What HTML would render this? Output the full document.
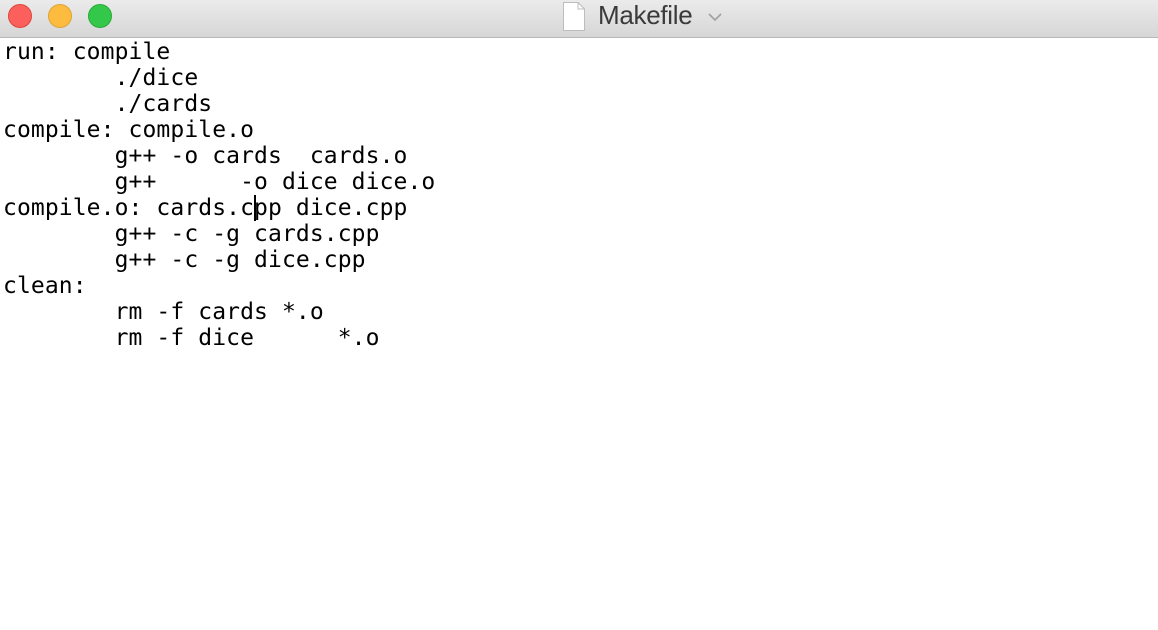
<!DOCTYPE html>
<html><head><meta charset="utf-8"><style>
html,body{margin:0;padding:0;width:1158px;height:630px;background:#fff;overflow:hidden}
.bar{position:absolute;left:0;top:0;width:1158px;height:37px;background:linear-gradient(#ebebeb,#d6d6d6);border-bottom:1px solid #b9b9b9}
.dot{position:absolute;top:4px;width:23px;height:23px;border-radius:50%}
.title{position:absolute;left:598px;top:0px;font-family:"Liberation Sans",sans-serif;font-size:26px;color:#3a3a3a;letter-spacing:-0.3px}
pre{position:absolute;left:3px;top:39px;margin:0;font-family:"DejaVu Sans Mono","Liberation Mono",monospace;font-size:23px;letter-spacing:0.1px;line-height:26px;color:#000}
.cur{position:absolute;left:254px;top:195px;width:2px;height:26px;background:#000}
</style></head><body>
<div class="bar">
<div class="dot" style="left:8px;background:#fc605c;border:1px solid #e0443e;width:22px;height:22px"></div>
<div class="dot" style="left:48px;background:#fdbc40;border:1px solid #dea236;width:22px;height:22px"></div>
<div class="dot" style="left:88px;background:#34c84a;border:1px solid #27aa35;width:22px;height:22px"></div>
<svg style="position:absolute;left:562px;top:1px" width="24" height="31" viewBox="0 0 24 31"><path d="M1.5 1.5H16L22.5 8V29.5H1.5Z" fill="#fff" stroke="#bdbdbd"/><path d="M16 1.5V8H22.5" fill="none" stroke="#bdbdbd"/></svg>
<div class="title">Makefile</div>
<svg style="position:absolute;left:707px;top:12px" width="16" height="10" viewBox="0 0 16 10"><path d="M2 2L8 8L14 2" fill="none" stroke="#a0a0a0" stroke-width="1.6"/></svg>
</div>
<pre>run: compile
        ./dice
        ./cards
compile: compile.o
        g++ -o cards  cards.o
        g++      -o dice dice.o
compile.o: cards.cpp dice.cpp
        g++ -c -g cards.cpp
        g++ -c -g dice.cpp
clean:
        rm -f cards *.o
        rm -f dice      *.o</pre>
<div class="cur"></div>
</body></html>
